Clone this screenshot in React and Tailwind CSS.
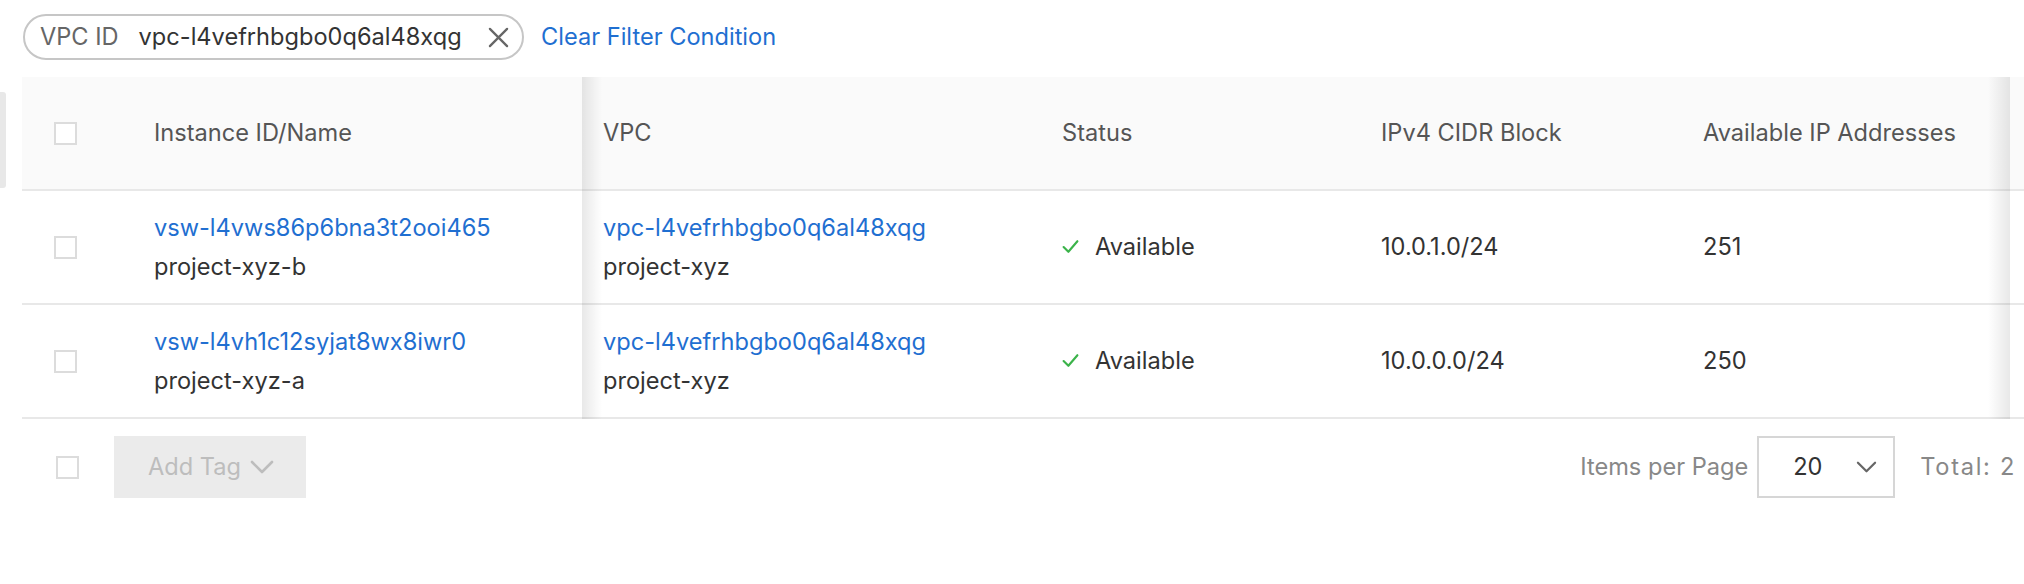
import React from "react";

const rows = [
  { id: "vsw-l4vws86p6bna3t2ooi465", name: "project-xyz-b", cidr: "10.0.1.0/24", ips: "251" },
  { id: "vsw-l4vh1c12syjat8wx8iwr0", name: "project-xyz-a", cidr: "10.0.0.0/24", ips: "250" },
];

function Checkbox() {
  return <div className="w-[23px] h-[23px] border-2 border-[#dcdcdc] bg-white shrink-0" />;
}

function Chevron({ className, stroke }) {
  return (
    <svg viewBox="0 0 24 14" className={className} fill="none">
      <polyline points="2,2 12,12 22,2" stroke={stroke} strokeWidth="2.6" strokeLinecap="round" strokeLinejoin="round" />
    </svg>
  );
}

const grid = "grid grid-cols-[108px_452px_459px_319px_322px_328px_1fr]";

export default function App() {
  return (
    <div className="relative w-[2024px] h-[584px] bg-white overflow-hidden font-['Inter',sans-serif] text-[23.6px] text-[#333]">
      <div className="absolute left-0 top-[92px] w-[6px] h-[96px] bg-[#e8e8e8] rounded-r-[3px]" />

      <div className="flex items-center pl-[23px] pt-[14px] gap-[17px]">
        <div className="h-[46px] w-[501px] border-2 border-[#c6c6c6] rounded-full flex items-center pl-[15px] pr-[13px]">
          <span className="text-[#666]">VPC ID</span>
          <span className="ml-[20px] text-[#333]">vpc-l4vefrhbgbo0q6al48xqg</span>
          <svg viewBox="0 0 22 22" className="ml-auto w-[21px] h-[21px]" fill="none">
            <path d="M2 2 L20 20 M20 2 L2 20" stroke="#666" strokeWidth="2.4" strokeLinecap="round" />
          </svg>
        </div>
        <span className="text-[#1f6fd1]">Clear Filter Condition</span>
      </div>

      <div className="relative ml-[22px] mt-[17px]">
        <div className={`${grid} h-[114px] bg-[#fafafa] border-b-2 border-[#e8e8e8] items-center text-[#555]`}>
          <div className="pl-[32px]"><Checkbox /></div>
          <div className="pl-[24px]">Instance ID/Name</div>
          <div className="pl-[21px]">VPC</div>
          <div className="pl-[21px]">Status</div>
          <div className="pl-[21px]">IPv4 CIDR Block</div>
          <div className="pl-[21px]">Available IP Addresses</div>
          <div />
        </div>
        {rows.map((r) => (
          <div key={r.id} className={`${grid} h-[114px] border-b-2 border-[#e8e8e8] items-center`}>
            <div className="pl-[32px]"><Checkbox /></div>
            <div className="pl-[24px] leading-[39px]">
              <div className="text-[#1f6fd1]">{r.id}</div>
              <div>{r.name}</div>
            </div>
            <div className="pl-[21px] leading-[39px]">
              <div className="text-[#1f6fd1]">vpc-l4vefrhbgbo0q6al48xqg</div>
              <div>project-xyz</div>
            </div>
            <div className="pl-[21px] flex items-center">
              <svg viewBox="0 0 16 14" className="w-[17px] h-[15px]" fill="none">
                <polyline points="1.5,7.5 6,12 14.5,2" stroke="#3bb34a" strokeWidth="2" strokeLinecap="round" strokeLinejoin="round" />
              </svg>
              <span className="ml-[16px]">Available</span>
            </div>
            <div className="pl-[21px]">{r.cidr}</div>
            <div className="pl-[21px]">{r.ips}</div>
            <div />
          </div>
        ))}
        <div className="absolute top-0 bottom-0 left-[560px] w-[20px] bg-gradient-to-r from-[rgba(0,0,0,0.09)] to-transparent" />
        <div className="absolute top-0 bottom-0 left-[1966px] w-[22px] bg-gradient-to-r from-transparent to-[rgba(0,0,0,0.09)]" />
      </div>

      <div className="ml-[22px] mt-[17px] flex items-center h-[62px]">
        <div className="pl-[34px]"><Checkbox /></div>
        <div className="ml-[35px] w-[192px] h-[62px] bg-[#ebebeb] flex items-center pl-[34px] text-[#bdbdbd]">
          <span>Add Tag</span>
          <Chevron className="ml-[8px] w-[26px] h-[14px]" stroke="#bdbdbd" />
        </div>
        <div className="ml-auto flex items-center">
          <span className="text-[#888]">Items per Page</span>
          <div className="ml-[9px] w-[138px] h-[62px] border-2 border-[#d6d6d6] flex items-center pl-[34px]">
            <span className="text-[#333]">20</span>
            <Chevron className="ml-[33px] w-[21px] h-[12px]" stroke="#666" />
          </div>
          <span className="ml-[25px] mr-[8px] text-[#888] tracking-[1.7px]">Total: 2</span>
        </div>
      </div>
    </div>
  );
}
